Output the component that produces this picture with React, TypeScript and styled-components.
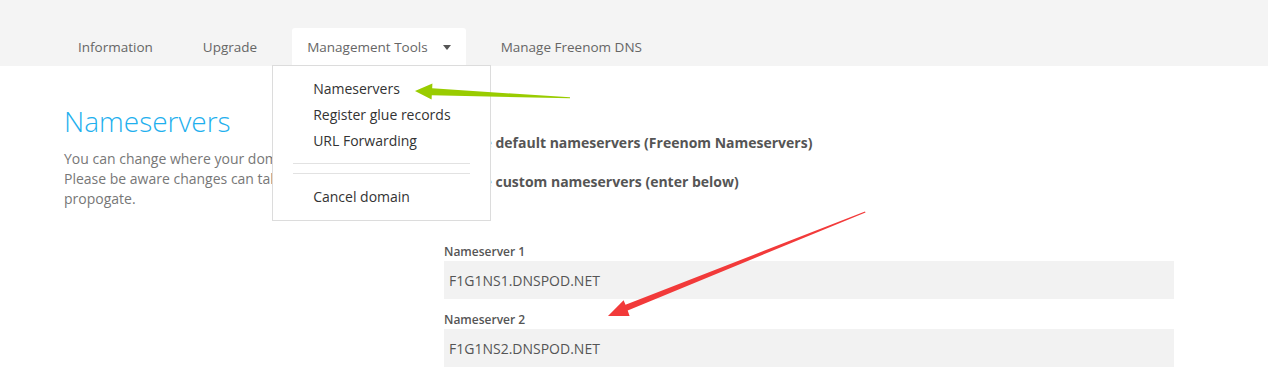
import React from "react";
import styled, { createGlobalStyle } from "styled-components";

const Global = createGlobalStyle`
  html, body { margin: 0; padding: 0; background: #fff; }
  body { font-family: "Open Sans", "Noto Sans", Arial, sans-serif; color: #555; }
  * { box-sizing: border-box; }
`;

const Page = styled.div`
  position: relative;
  width: 1268px;
  height: 377px;
  overflow: hidden;
`;

const TopBar = styled.div`
  background: #f4f4f4;
  height: 66px;
  display: flex;
  align-items: flex-end;
  padding-left: 63px;
`;

const Tabs = styled.nav`
  display: flex;
  gap: 20px;
`;

const Tab = styled.div<{ $active?: boolean }>`
  position: relative;
  height: 38px;
  padding: 0 15px;
  display: flex;
  align-items: center;
  gap: 15px;
  font-size: 13.5px;
  color: #666;
  background: ${(p) => (p.$active ? "#fff" : "transparent")};
  border-radius: 3px 3px 0 0;
  white-space: nowrap;
`;

const Caret = styled.span`
  width: 0;
  height: 0;
  border-left: 4px solid transparent;
  border-right: 4px solid transparent;
  border-top: 5px solid #555;
  margin-top: 1px;
`;

const Dropdown = styled.div`
  position: absolute;
  left: -20px;
  top: 37px;
  width: 219px;
  background: #fff;
  border: 1px solid #dcdcdc;
  padding: 10px 0;
  z-index: 5;
`;

const DropItem = styled.div`
  padding-left: 40px;
  height: 26px;
  line-height: 26px;
  font-size: 14px;
  color: #333;
`;

const Divider = styled.div<{ $mt: number; $mb: number }>`
  height: 1px;
  background: #e2e2e2;
  margin: ${(p) => p.$mt}px 20px ${(p) => p.$mb}px;
`;

const Content = styled.div`
  display: flex;
  padding: 37px 0 0 64px;
`;

const LeftCol = styled.div`
  width: 380px;
  padding-right: 20px;
`;

const Heading = styled.h1`
  margin: 0;
  font-size: 28px;
  line-height: 36px;
  font-weight: 300;
  color: #1fb0ee;
`;

const Para = styled.p`
  margin: 10px 0 0;
  font-size: 14px;
  line-height: 20px;
  color: #777;
`;

const RightCol = styled.div`
  width: 730px;
  padding-top: 29px;
`;

const RadioRow = styled.label<{ $mt?: number }>`
  display: flex;
  align-items: center;
  gap: 8px;
  height: 20px;
  margin-top: ${(p) => p.$mt ?? 0}px;
  font-size: 14px;
  font-weight: 700;
  color: #555;
`;

const Radio = styled.span`
  width: 14px;
  height: 14px;
  border-radius: 50%;
  border: 1px solid #bbb;
  background: #fff;
`;

const FieldLabel = styled.div<{ $mt: number }>`
  margin-top: ${(p) => p.$mt}px;
  font-size: 12px;
  line-height: 16px;
  font-weight: 600;
  color: #555;
`;

const Input = styled.div`
  margin-top: 1px;
  height: 38px;
  background: #f2f2f2;
  display: flex;
  align-items: center;
  padding-left: 5px;
  font-size: 14px;
  color: #555;
`;

const Overlay = styled.svg`
  position: absolute;
  left: 0;
  top: 0;
  pointer-events: none;
  z-index: 10;
`;

export default function App() {
  return (
    <Page>
      <Global />
      <TopBar>
        <Tabs>
          <Tab>Information</Tab>
          <Tab>Upgrade</Tab>
          <Tab $active>
            Management Tools
            <Caret />
            <Dropdown>
              <DropItem>Nameservers</DropItem>
              <DropItem>Register glue records</DropItem>
              <DropItem>URL Forwarding</DropItem>
              <Divider $mt={9} $mb={9} />
              <Divider $mt={0} $mb={10} />
              <DropItem>Cancel domain</DropItem>
            </Dropdown>
          </Tab>
          <Tab>Manage Freenom DNS</Tab>
        </Tabs>
      </TopBar>
      <Content>
        <LeftCol>
          <Heading>Nameservers</Heading>
          <Para>
            You can change where your domain points to here.
            <br />
            Please be aware changes can take up to 24 hours to propogate.
          </Para>
        </LeftCol>
        <RightCol>
          <RadioRow>
            <Radio />
            Use default nameservers (Freenom Nameservers)
          </RadioRow>
          <RadioRow $mt={19}>
            <Radio />
            Use custom nameservers (enter below)
          </RadioRow>
          <FieldLabel $mt={53}>Nameserver 1</FieldLabel>
          <Input>F1G1NS1.DNSPOD.NET</Input>
          <FieldLabel $mt={13}>Nameserver 2</FieldLabel>
          <Input>F1G1NS2.DNSPOD.NET</Input>
        </RightCol>
      </Content>
      <Overlay width="1268" height="377" viewBox="0 0 1268 377">
        <polygon
          points="415,91 432.4,83.5 432.2,88.3 570,97.3 570,98.3 431.8,95.3 431.6,99.5"
          fill="#99cc00"
        />
        <polygon
          points="608,316 623.6,300.2 625.5,304.8 865,211.5 865.5,212.5 627.7,310.4 629.6,316"
          fill="#f23a3a"
        />
      </Overlay>
    </Page>
  );
}
